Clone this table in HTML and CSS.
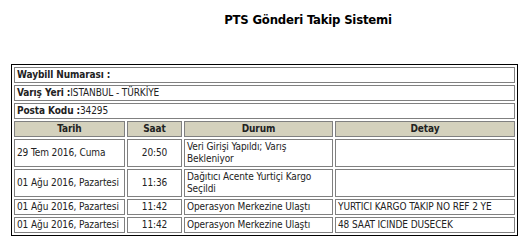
FILE: index.html
```html
<!DOCTYPE html>
<html lang="tr">
<head>
<meta charset="utf-8">
<title>PTS Gönderi Takip Sistemi</title>
<link rel="stylesheet" href="styles.css">
</head>
<body>
<h1 class="title">PTS Gönderi Takip Sistemi</h1>
<table class="track">
  <colgroup>
    <col class="c-tarih">
    <col class="c-saat">
    <col class="c-durum">
    <col class="c-detay">
  </colgroup>
  <tr><td colspan="4"><b>Waybill Numarası :</b></td></tr>
  <tr><td colspan="4"><b>Varış Yeri :</b>ISTANBUL - TÜRKİYE</td></tr>
  <tr><td colspan="4"><b>Posta Kodu :</b>34295</td></tr>
  <tr class="head"><th>Tarih</th><th>Saat</th><th>Durum</th><th>Detay</th></tr>
  <tr><td class="nowrap">29 Tem 2016, Cuma</td><td class="center">20:50</td><td>Veri Girişi Yapıldı; Varış Bekleniyor</td><td></td></tr>
  <tr><td class="nowrap">01 Ağu 2016, Pazartesi</td><td class="center">11:36</td><td>Dağıtıcı Acente Yurtiçi Kargo Seçildi</td><td></td></tr>
  <tr><td class="nowrap">01 Ağu 2016, Pazartesi</td><td class="center">11:42</td><td>Operasyon Merkezine Ulaştı</td><td class="nowrap">YURTICI KARGO TAKIP NO REF 2 YE</td></tr>
  <tr><td class="nowrap">01 Ağu 2016, Pazartesi</td><td class="center">11:42</td><td>Operasyon Merkezine Ulaştı</td><td>48 SAAT ICINDE DUSECEK</td></tr>
</table>
</body>
</html>
```

FILE: styles.css
```css
html, body {
  margin: 0;
  padding: 0;
  background: #ffffff;
}
body {
  font-family: "DejaVu Sans Condensed", "DejaVu Sans", Verdana, sans-serif;
  font-stretch: condensed;
  color: #111;
}
.title {
  margin: 12px 0 0 0;
  padding-left: 90px;
  text-align: center;
  font-size: 13px;
  line-height: 16px;
  font-weight: bold;
  letter-spacing: -0.2px;
  color: #000;
}
.track {
  margin: 36px 0 0 11px;
  width: 507px;
  table-layout: fixed;
  border-collapse: separate;
  border-spacing: 2px;
  border: 1px solid #000;
  font-size: 10px;
  line-height: 12px;
  letter-spacing: -0.1px;
}
.c-tarih { width: 111px; }
.c-saat { width: 55px; }
.c-durum { width: 149px; }
.track td, .track th {
  border: 1px solid #808080;
  padding: 1px 2px;
  text-align: left;
  vertical-align: middle;
  color: #222;
}
.track th {
  background: #d4d1bd;
  text-align: center;
  font-weight: bold;
}
.track td.center {
  text-align: center;
}
.track td.nowrap {
  white-space: nowrap;
}
```
